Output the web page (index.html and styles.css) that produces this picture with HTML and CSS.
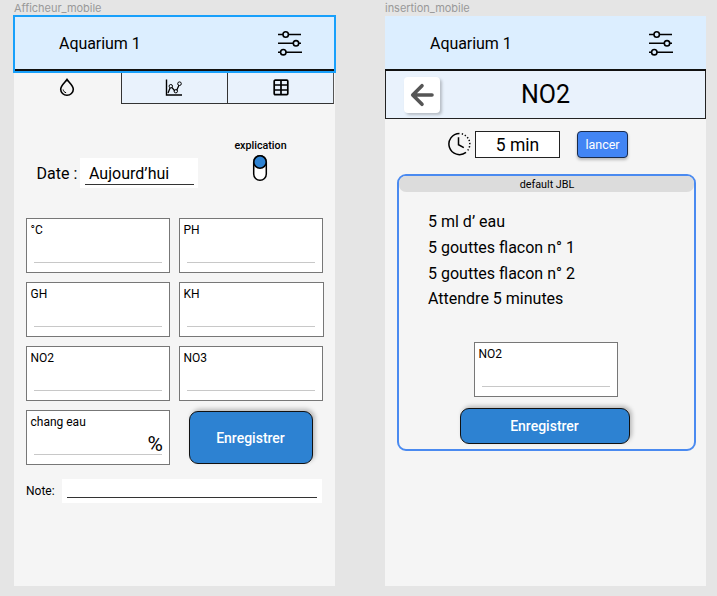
FILE: index.html
```html
<!DOCTYPE html>
<html lang="fr">
<head>
<meta charset="utf-8">
<title>Aquarium</title>
<link rel="stylesheet" href="styles.css">
</head>
<body>
<main class="board">
  <section class="artboard">
    <div class="frame-name">Afficheur_mobile</div>
    <div class="screen">
      <header class="header selected">
        <span>Aquarium 1</span>
        <svg class="sliders" width="24" height="26" viewBox="0 0 24 26"><path d="M0 4.5h23M0 13.3h23M0 22.2h24"/><circle cx="7.7" cy="4.5" r="2.7"/><circle cx="18" cy="13.3" r="2.7"/><circle cx="5.3" cy="22.2" r="2.7"/></svg>
      </header>
      <nav class="tabs">
        <div class="tab active">
          <svg width="16" height="19" viewBox="0 0 16 19"><path d="M8 1.5C6.3 4.2 1.7 7.2 1.7 11.3a6.3 6 0 0 0 12.6 0C14.3 7.2 9.7 4.2 8 1.5Z" fill="none" stroke="#000" stroke-width="1.6"/><path d="M4.1 11.5c.3 1.8 1.4 2.9 3 3.2" fill="none" stroke="#000" stroke-width="1"/></svg>
        </div>
        <div class="tab">
          <svg width="18" height="18" viewBox="0 0 18 18" fill="none" stroke="#000"><path d="M1.5 .5v15.500H17" stroke-width="1.4"/><path d="m3 14 2.200-5.300M6.900 8.500l3.100 3.600M11.700 11.200l2.300-5" stroke-width="1.300"/><circle cx="5.800" cy="7.200" r="1.700"/><circle cx="10.800" cy="12.200" r="1.700"/><circle cx="14.500" cy="4.700" r="1.800"/></svg>
        </div>
        <div class="tab last">
          <svg width="16" height="17" viewBox="0 0 16 17" fill="none" stroke="#000" stroke-width="1.700"><rect x="1.200" y="1.200" width="13.600" height="14.400" rx="1"/><path d="M8 1v15M1 6h14M1 11h14"/></svg>
        </div>
      </nav>
      <div class="date-row">
        <span class="date-label">Date :</span>
        <div class="date-box"><span>Aujourd’hui</span></div>
        <div class="explain">
          <span>explication</span>
          <svg width="16" height="28" viewBox="0 0 16 28"><rect x="1.700" y="1.700" width="12.600" height="24.600" rx="6.300" fill="#fff" stroke="#000" stroke-width="1.500"/><circle cx="8" cy="8" r="6.200" fill="#2d82d2" stroke="#000" stroke-width="1.500"/></svg>
        </div>
      </div>
      <div class="fields">
        <div class="field">°C</div>
        <div class="field">PH</div>
        <div class="field">GH</div>
        <div class="field wide">KH</div>
        <div class="field">NO2</div>
        <div class="field">NO3</div>
        <div class="field">chang eau<span class="percent">%</span></div>
        <button class="save">Enregistrer</button>
      </div>
      <div class="note"><span>Note:</span><div class="note-box"></div></div>
    </div>
  </section>

  <section class="artboard second">
    <div class="frame-name">insertion_mobile</div>
    <div class="screen">
      <header class="header">
        <span>Aquarium 1</span>
        <svg class="sliders" width="24" height="26" viewBox="0 0 24 26"><path d="M0 4.5h23M0 13.3h23M0 22.2h24"/><circle cx="7.7" cy="4.5" r="2.7"/><circle cx="18" cy="13.3" r="2.7"/><circle cx="5.3" cy="22.2" r="2.7"/></svg>
      </header>
      <div class="title-bar">
        <button class="back" aria-label="Retour"><svg width="24" height="24" viewBox="0 0 24 24"><path d="M22 12H3M12 2.700 2.700 12l9.300 9.300" fill="none" stroke="#555" stroke-width="3.600" stroke-linecap="round" stroke-linejoin="round"/></svg></button>
        <h1>NO2</h1>
      </div>
      <div class="timer">
        <svg width="24" height="24" viewBox="0 0 24 24" fill="none" stroke="#000" stroke-width="1.500"><path d="M12.500 1.400a10.600 10.600 0 1 0 6.500 19"/><path d="M14.800 1.800A10.600 10.600 0 0 1 19.700 19.600" stroke-dasharray="1.300 1.900"/><path d="M11.500 5.200v7.500l5.300 3"/></svg>
        <div class="minutes">5 min</div>
        <button class="start">lancer</button>
      </div>
      <article class="card">
        <div class="card-head">default JBL</div>
        <div class="steps">
          <p>5 ml d’ eau</p>
          <p>5 gouttes flacon n° 1</p>
          <p>5 gouttes flacon n° 2</p>
          <p>Attendre 5 minutes</p>
        </div>
        <div class="field">NO2</div>
        <button class="save">Enregistrer</button>
      </article>
    </div>
  </section>
</main>
</body>
</html>
```
FILE: styles.css
```css
* { box-sizing: border-box; }
body {
  margin: 0;
  height: 596px;
  overflow: hidden;
  background: #e5e5e5;
  color: #000;
  font-family: Roboto, sans-serif;
  font-size: 16px;
}
p, h1 { margin: 0; }
svg { display: block; flex: none; }
button { font-family: inherit; padding: 0; color: #fff; }

.board { display: flex; gap: 50px; padding-left: 14px; }
.artboard { width: 321px; }
.frame-name {
  height: 16px;
  line-height: 16px;
  font-size: 11px;
  font-family: Inter, sans-serif;
  letter-spacing: -.03px;
  color: #999;
  white-space: nowrap;
}
.screen { height: 570px; background: #f5f5f5; }

.header {
  position: relative;
  height: 55px;
  display: flex;
  justify-content: space-between;
  padding: 0 33px 0 45px;
  line-height: 56px;
  letter-spacing: -.05px;
  background: #dceeff;
  border-bottom: 2px solid #111;
}
.selected::after {
  content: "";
  position: absolute;
  inset: -1px -1px -4px;
  border: 2px solid #18a0fb;
}
.sliders { margin-top: 14px; stroke: #000; stroke-width: 1.6; fill: #dceeff; }

.tabs { display: flex; height: 33px; }
.tab {
  width: 106px;
  display: flex;
  justify-content: center;
  padding: 8px 1px 0 0;
  background: #e9f2fc;
  border-left: 1px solid #333;
  border-bottom: 1px solid #333;
}
.tab.active { width: 107px; padding-top: 7px; background: none; border: 0; }
.tab.last { width: 107px; padding-right: 0; border-right: 1px solid #555; }

.date-row { display: flex; height: 114px; padding: 35px 0 0 22px; }
.date-label { width: 44px; margin-top: 19px; padding-left: .5px; line-height: 32px; white-space: nowrap; }
.date-box { width: 118px; height: 30px; margin-top: 19px; padding: 0 4px 3px 5px; background: #fff; }
.date-box span { display: block; height: 27px; padding-left: 4px; line-height: 32px; border-bottom: 1px solid #333; }
.explain {
  width: 125px;
  display: flex;
  flex-direction: column;
  align-items: center;
  font-size: 10.7px;
  font-weight: 500;
  line-height: 13px;
}
.explain svg { margin: 2px 1px 0 0; }

.fields { display: grid; grid-template-columns: 144px 144px; gap: 9px; padding-left: 12px; }
.field {
  position: relative;
  width: 144px;
  height: 55px;
  padding: 3px 3.5px;
  font-size: 12px;
  line-height: 16px;
  background: #fff;
  border: 1px solid #777;
}
.field.wide { width: 145px; }
.field::after {
  content: "";
  position: absolute;
  left: 7px;
  width: 128px;
  bottom: 9px;
  height: 1px;
  background: #c8c8c8;
}
.percent { position: absolute; right: 6px; top: 21px; font-size: 21px; line-height: 24px; }
.save {
  width: 125px;
  height: 54px;
  margin-left: 9px;
  padding-right: 1px;
  font-size: 14px;
  font-weight: 500;
  background: #2d82d2;
  border: 1px solid #111;
  border-radius: 9px;
  box-shadow: 2px -2px 4px rgba(0, 0, 0, .25);
}
.fields .save { width: 124px; height: 53px; margin: 1px 0 0 10px; }
.note { display: flex; padding: 14px 0 0 12px; font-size: 12px; line-height: 24px; }
.note span { width: 36px; }
.note-box { width: 260px; height: 24px; padding: 18px 5px 0; background: #fff; }
.note-box::before { content: ""; display: block; height: 1px; background: #333; }

.title-bar {
  display: grid;
  grid-template-columns: 37px 1fr 55px;
  height: 48px;
  padding: 6px 0 0 18px;
  background: #e9f2fc;
  border: 1px solid #222;
  border-top: 0;
}
.back {
  width: 36px;
  height: 36px;
  display: grid;
  place-items: center;
  background: #fff;
  border: 0;
  border-radius: 4px;
  box-shadow: 2px 2px 3px rgba(0, 0, 0, .22);
}
h1 { font-size: 25px; font-weight: 400; line-height: 36px; text-align: center; }

.timer { display: flex; padding: 12px 0 0 62px; }
.timer svg { margin-top: 1px; }
.minutes {
  width: 85px;
  height: 27px;
  margin: 0 17px 0 4px;
  text-align: center;
  line-height: 26px;
  font-size: 17.5px;
  background: #fff;
  border: 1px solid #222;
}
.start {
  width: 51px;
  height: 27px;
  font-size: 12.5px;
  background: #4285f4;
  border: 1px solid #1a2b4a;
  border-radius: 4px;
  box-shadow: 0 2px 3px rgba(0, 0, 0, .25);
}

.card {
  width: 299px;
  height: 277px;
  margin: 16px 0 0 12px;
  border: 2px solid #4a8af0;
  border-radius: 9px;
}
.card-head {
  height: 16px;
  padding-left: 1px;
  background: #dcdcdc;
  border-radius: 7px;
  font-size: 10.8px;
  line-height: 17px;
  text-align: center;
}
.steps { padding: 17px 0 0 29px; line-height: 25.8px; }
.card .field { margin: 30px 0 0 75px; }
.card .save { display: block; width: 170px; height: 36px; margin: 11px 0 0 61px; }
```
